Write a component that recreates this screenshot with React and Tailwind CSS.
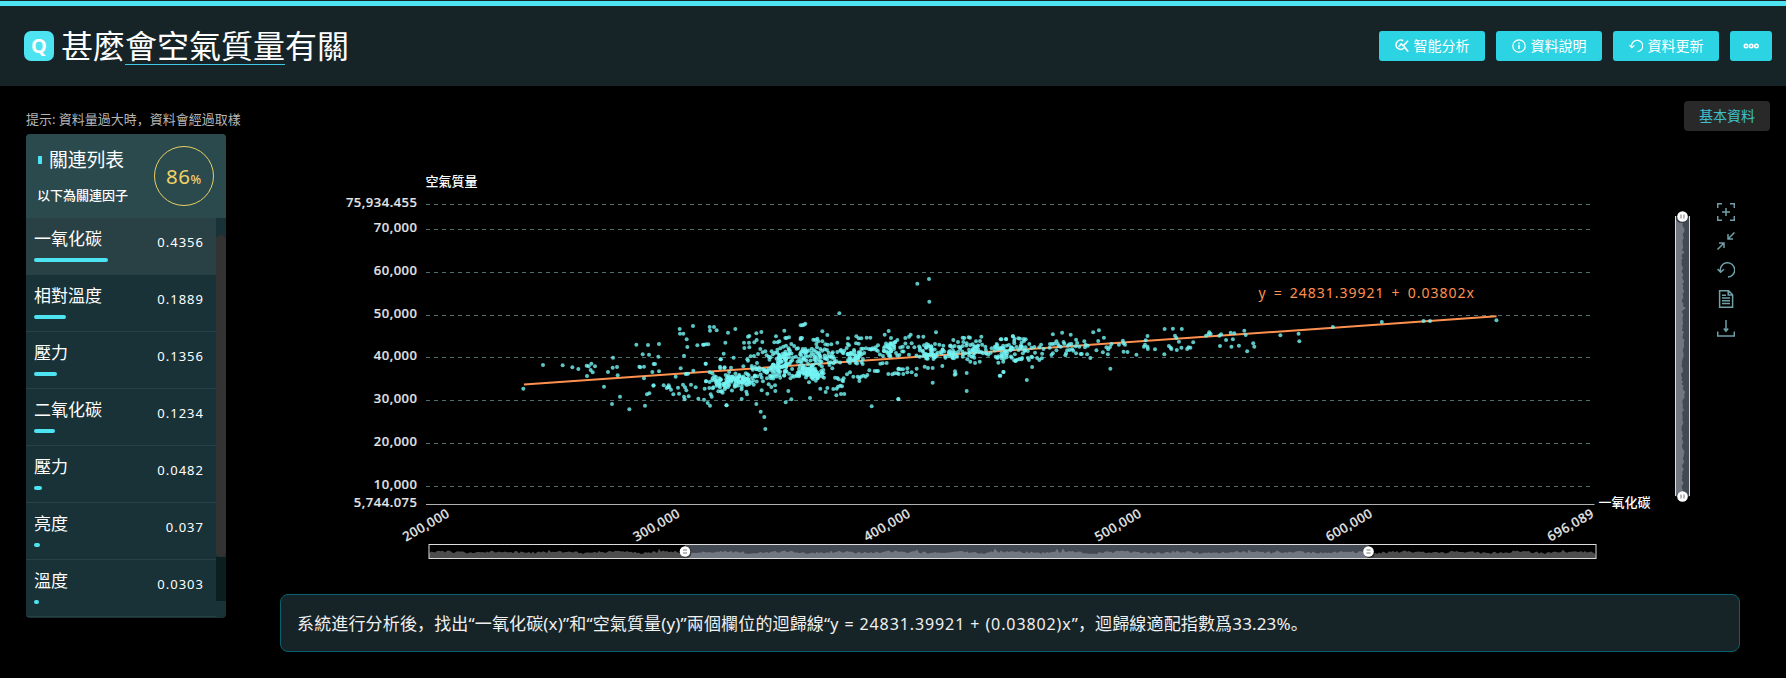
import React from 'react';
import clsx from 'clsx';

const factors = [
  { name: '一氧化碳', value: '0.4356', bar: 74 },
  { name: '相對溫度', value: '0.1889', bar: 32 },
  { name: '壓力', value: '0.1356', bar: 23 },
  { name: '二氧化碳', value: '0.1234', bar: 21 },
  { name: '壓力', value: '0.0482', bar: 8 },
  { name: '亮度', value: '0.037', bar: 6 },
  { name: '溫度', value: '0.0303', bar: 5 },
];

const yTicks = [
  { label: '75,934.455', y: 204.5 },
  { label: '70,000', y: 229.5 },
  { label: '60,000', y: 272.5 },
  { label: '50,000', y: 315.5 },
  { label: '40,000', y: 357.5 },
  { label: '30,000', y: 400.5 },
  { label: '20,000', y: 443.5 },
  { label: '10,000', y: 486.5 },
  { label: '5,744.075', y: 504.5 },
];

const xTicks = [
  { label: '200,000', x: 426 },
  { label: '300,000', x: 656.5 },
  { label: '400,000', x: 887 },
  { label: '500,000', x: 1118 },
  { label: '600,000', x: 1349 },
  { label: '696,089', x: 1570.5 },
];

// Each group is "x,y" pairs from its own origin, kx and ky units to the pixel
const pointGroups = [
  {
    x: 330,
    y: 160,
    kx: 3,
    ky: 3,
    pts: '639,615 698,616 727,622 745,627 770,617 776,619 784,611 795,619 782,630 788,637 771,648 834,636 848,623 861,621 849,593 863,646 919,554 954,555 987,552 938,583 957,584 985,590 928,620 931,622 942,620 971,612 975,612 967,636 987,634 1049,507 1050,521 1060,521 1089,498 1070,538 1072,561 1062,587 1102,556 1119,554 1122,554 1128,553 1135,553 1139,501 1152,501 1140,512 1160,511 1186,548 1194,518 1181,581 1172,598 1127,611 1052,625 1090,632 1070,641 1074,641 1067,642 1037,650 1139,637 1147,640 1170,620 1183,624 1128,664',
  },
  {
    x: 330,
    y: 370,
    kx: 3,
    ky: 3,
    pts: '580,56 822,50 870,80 846,102 898,118 945,107 951,73 958,70 971,46 970,47 942,25 1001,46 1010,54 1016,46 1018,52 1014,52 1023,59 1030,73 1044,53 1047,71 1059,44 1065,52 1069,61 1062,80 1064,88 1076,79 1083,44 1097,52 1105,86 1122,89 1133,99 1140,107 1124,56 1128,34 1138,54 1142,73 1145,80 1190,106 1150,52 1158,32 1160,42 1168,25 1172,28 1165,64 1178,68 1187,15 1195,35 1197,46 1184,58',
  },
  {
    x: 660,
    y: 310,
    kx: 3,
    ky: 3,
    pts: '226,57 264,80 268,78 252,98 267,98 283,97 290,90 289,70 304,66 307,96 253,114 268,112 301,117 294,132 308,127 316,124 320,136 348,79 343,97 353,97 358,94 373,62 376,84 380,84 387,82 394,102 361,115 370,110 378,107 386,115 376,125 390,122 335,124 339,133 345,128 326,140 352,128 358,135 365,141 422,46 427,46 432,44 436,41 422,84 426,84 422,88 410,116 414,115 428,117 436,117 433,128 440,124 437,137 460,89 466,90 472,86 475,94 469,102 487,64 502,75 487,94 496,103 503,104 514,103 532,98 538,10 471,112 481,117 487,122 494,118 462,121 455,128 461,134 473,130 480,137 501,120 506,128 510,140 564,85 563,102 567,106 560,114 553,122 550,130 541,122 532,126 572,130 564,131 589,79 596,85 604,85 620,83 631,83 596,101 588,100 604,116 609,116 582,120 596,127 600,137 588,137 618,115 627,117 632,118 638,115 642,118 654,106 649,120 674,74 686,63 693,84 691,100 698,100 706,96 712,90 672,113 682,111 680,124 687,128 694,123 702,117 708,129 712,137 182,148 221,143 194,172 181,175 213,173 262,148 264,152 272,139 282,138 291,159 250,169 275,168 285,171 137,161 447,217 385,243 346,243 322,251 334,231 305,241 326,223 259,245 261,253 245,267 199,286 289,282 302,305 313,321 316,357 377,277 394,268 450,264 481,236 502,234 497,246 520,237 530,236 534,230 541,227 546,229 547,211 551,205 549,214 532,204 525,203 536,208 543,252 529,256 553,252 570,187 580,200 561,193 598,204 598,213 603,200 593,200 610,197 617,200 622,195 608,162 628,181 644,183 650,183 654,183 661,161 668,160 685,192 697,193 712,190 715,177 715,267 635,289 704,190 680,159',
  },
  {
    x: 720,
    y: 240,
    kx: 3,
    ky: 3,
    pts: '592,131 627,117 628,185 572,284 567,290 556,294 595,290 610,290 648,277 535,478 638,428 588,405 575,397 590,386 562,397 550,402 536,402 536,386 542,388 549,388 562,385 614,380 624,384 638,384 667,378 705,394 707,402 704,404 740,399 740,453 839,407 850,396 728,293 733,294 746,292 750,293 784,290 700,300 714,306 730,306 768,304 780,303 842,298 858,297 879,289 895,295 670,317 690,318 704,318 716,320 728,318 620,312 625,315 612,316 645,312 658,314 564,322 583,322 575,310 600,325 830,312 825,320 815,325 800,340 812,338 835,368 845,355 860,352 887,362 898,358',
  },
  {
    x: 1000,
    y: 250,
    kx: 2.8,
    ky: 3,
    pts: '4,268 17,268 36,259 56,266 66,267 72,268 82,282 25,285 40,280 18,287 46,291 32,292 96,291 88,293 115,284 110,292 122,297 118,311 98,308 148,253 174,248 198,254 140,282 146,282 152,281 158,274 162,282 178,276 180,281 190,287 194,283 200,282 213,269 216,279 212,289 222,290 236,274 240,284 246,287 238,292 244,313 253,324 226,312 229,312 213,310 205,302 202,297 188,301 195,300 183,316 185,310 144,315 148,310 158,301 170,290 139,293 165,288 261,247 277,241 291,263 275,273 270,301 288,307 298,292 303,298 302,313 308,291 312,282 333,284 344,272 346,280 350,284 346,305 357,306 382,314 309,356 413,258 408,271 406,284 403,290 413,290 414,297 434,298 461,237 484,236 509,237 490,257 494,264 501,275 541,277 473,288 478,293 480,297 495,300 508,293 524,297 528,292 533,293 460,313 586,247 590,252 577,257 584,253 619,253 614,257 616,288 633,270 646,248 656,250 652,268 648,290 669,287 684,242 688,255 709,280 712,290 692,304 785,256 836,251 838,274 932,231 1069,216 1186,213 1204,213 1390,211 75,390 90,351 10,366 1,377 9,335 43,333 48,329 60,328 62,324 64,310 78,324 88,320 90,322 81,330 104,324 110,330 117,325 5,318 12,308 18,316 20,310 10,316 70,302 78,303 62,296 52,300',
  },
];

// Dense spots: centre, spread and number of samples
const clusters = [
  [737, 381, 9, 3.5, 62],
  [724, 383, 7, 5, 28],
  [752, 378, 9, 5, 26],
  [773, 372, 7, 4, 48],
  [783, 360, 7, 5, 52],
  [803, 371, 7, 4.5, 50],
  [816, 373, 5, 3, 38],
  [805, 356, 5, 5, 26],
  [825, 360, 5, 4, 28],
  [853, 357, 6, 4, 34],
  [891, 350, 8, 4.5, 32],
  [931, 353, 7, 4, 40],
  [951, 354, 6, 3.5, 24],
  [972, 353, 8, 5, 40],
  [1004, 352, 6, 4, 26],
  [1021, 347, 7, 3.5, 14],
];

const makeRandom = (seed) => () => {
  seed = (seed * 16807) % 2147483647;
  return seed / 2147483647;
};

const points = pointGroups.flatMap((g) =>
  g.pts.split(' ').map((p) => {
    const [px, py] = p.split(',').map(Number);
    return [g.x + px / g.kx, g.y + py / g.ky];
  })
);

const rand = makeRandom(4711);
const spread = () => (rand() + rand() + rand() - 1.5) * 2;
clusters.forEach(([cx, cy, sx, sy, n]) => {
  for (let i = 0; i < n; i++) {
    points.push([cx + spread() * sx, cy + spread() * sy]);
  }
});

const wave = (length, seed) => {
  const r = makeRandom(seed);
  return Array.from({ length }, (_, i) => 5.8 + Math.sin(i / 4.5) * 0.6 + (r() - 0.5) * 2.4 + (r() > 0.985 ? 2.5 : 0));
};

const xWave = `M429,558 ${wave(584, 91).map((h, i) => `L${429 + i * 2},${(558 - h).toFixed(1)}`).join(' ')} L1596,558 Z`;
const yWave = `M1676,216 ${wave(141, 37).map((h, i) => `L${(1677 + h).toFixed(1)},${216 + i * 2}`).join(' ')} L1676,496 Z`;

const Handle = ({ x, y, vertical }) => (
  <g transform={`translate(${x} ${y}) rotate(${vertical ? 90 : 0})`}>
    <circle cx="1" cy="1" r="5.5" fill="#000" opacity="0.5" />
    <circle r="5.3" fill="#fff" />
    <path d="M-2,-1.5H2M-2,1.5H2" stroke="#777" strokeWidth="1" />
  </g>
);

const ScatterChart = () => (
  <svg
    width="1474"
    height="463"
    viewBox="226 131 1474 463"
    className="block shrink-0 font-['Noto_Sans','Noto_Sans_CJK_SC',sans-serif] text-[13px] font-medium"
  >
    {yTicks.slice(0, -1).map((t) => (
      <path key={t.y} d={`M426,${t.y}H1591`} stroke="#4d6f6d" strokeDasharray="4 4" />
    ))}
    <path d="M426,504.5H1594.5" stroke="#b0b0b0" />
    <g fill="#e6e6e6" stroke="#e6e6e6" strokeWidth="0.2" letterSpacing="0.5">
      {yTicks.map((t) => (
        <text key={t.label} x="417.5" y={t.y + 2.5} textAnchor="end">
          {t.label}
        </text>
      ))}
      {xTicks.map((t) => (
        <text key={t.label} transform={`translate(${t.x} 525) rotate(-30)`} y="4.5" textAnchor="middle">
          {t.label}
        </text>
      ))}
    </g>
    <text x="425.5" y="185.5" fill="#fff">空氣質量</text>
    <text x="1598.5" y="507" fill="#fff">一氧化碳</text>

    <path d="M524,384.6L1496.5,316.2" stroke="#ff9150" strokeWidth="2" />
    {points.map(([x, y], i) => (
      <circle key={i} cx={x} cy={y} r="2" fill="#74f5f5" fillOpacity="0.8" />
    ))}
    <text x="1258.5" y="298" fill="#ff9150" className="text-[14px] font-normal" letterSpacing="1" wordSpacing="2.4">
      y = 24831.39921 + 0.03802x
    </text>

    {/* horizontal zoom slider */}
    <path d={xWave} fill="#4d4d4d" />
    <rect x="685" y="545" width="683.5" height="13" fill="#a7b7cc" fillOpacity="0.4" />
    <rect x="429" y="544.5" width="1167" height="14" fill="none" stroke="#dcdcdc" />
    <Handle x={685} y={551.5} />
    <Handle x={1368.5} y={551.5} />

    {/* vertical zoom slider */}
    <path d={yWave} fill="#4d4d4d" />
    <rect x="1675.5" y="216.5" width="14" height="280" fill="#a7b7cc" fillOpacity="0.4" />
    <path d="M1675.5,216V496M1689.5,216V496" stroke="#dcdcdc" />
    <Handle x={1682.5} y={216.5} vertical />
    <Handle x={1682.5} y={496.5} vertical />
  </svg>
);

const Icon = ({ size = 14, children, ...rest }) => (
  <svg width={size} height={size} viewBox="0 0 18 18" fill="none" stroke="currentColor" strokeWidth="1.5" {...rest}>
    {children}
  </svg>
);

const UndoPath = () => <path d="M3.4,10.2A7.2,7.2 0 1 1 11,16.1M0.6,8L3.6,11.2L7,8.2" />;

const toolIcons = [
  <path d="M.7,5V.7H5M13,.7H17.3V5M17.3,13V17.3H13M5,17.3H.7V13M9,5V13M5,9H13" />,
  <path d="M17.5,.5L11,7M11,2V7H16M.5,17.5L7,11M2,11H7V16" />,
  <UndoPath />,
  <path d="M2.6,.7H11.5L15.6,4.8V17.3H2.6ZM11.2,.7V5H15.6M5,5.2H9M5,8H13M5,10.8H13M5,13.6H13" />,
  <path d="M.7,12.5V17H17.3V12.5M9,1V12M6.8,9.5L9,12.2L11.2,9.5" />,
];

const ActionButton = ({ icon, children }) => (
  <button className="flex h-[30px] w-[106px] items-center justify-center gap-[5px] rounded-[3px] bg-[#2cd3e3] text-sm text-white">
    {icon}
    <span>{children}</span>
  </button>
);

const Header = () => (
  <header className="flex h-[86px] items-start justify-between border-t border-[#172428] bg-[#162428]">
    <div className="flex w-full items-center justify-between border-t-[5px] border-[#4de3f0] pt-[25px] pr-[14px] pl-6">
      <div className="flex h-[30px] items-center gap-[7px]">
        <div className="flex size-[30px] items-center justify-center rounded-[7px] bg-[#4de3f0] text-[20px] font-bold text-white">
          Q
        </div>
        <h1 className="text-[32px] leading-[36px] whitespace-nowrap text-white">
          甚麼<span className="inline-block border-b border-[#3fc8e8]">會空氣質量</span>有關
        </h1>
      </div>
      <div className="flex gap-[11px]">
        <ActionButton
          icon={
            <Icon strokeWidth="2">
              <path d="M10.5,2.2A6,6 0 1 0 12.5,10.5L17,16.5M4.8,10L8,6.2L10.5,8.8L16.8,2.2" />
            </Icon>
          }
        >
          智能分析
        </ActionButton>
        <ActionButton
          icon={
            <Icon strokeWidth="1.6">
              <circle cx="9" cy="9" r="8" />
              <path d="M9,7.5V13M9,4.4V6.2" strokeWidth="2" />
            </Icon>
          }
        >
          資料說明
        </ActionButton>
        <ActionButton icon={<Icon><UndoPath /></Icon>}>資料更新</ActionButton>
        <button className="flex h-[30px] w-[42px] items-center justify-center rounded-[3px] bg-[#2cd3e3] text-white">
          <svg width="16" height="6" viewBox="0 0 16 6" fill="none" stroke="currentColor" strokeWidth="1.6">
            <circle cx="3" cy="3" r="1.7" />
            <circle cx="8.2" cy="3" r="1.7" />
            <circle cx="13.4" cy="3" r="1.7" />
          </svg>
        </button>
      </div>
    </div>
  </header>
);

const FactorPanel = () => (
  <aside className="ml-[26px] w-[200px] shrink-0">
    <p className="pt-[23px] pb-[5px] text-[13px] leading-5 whitespace-nowrap text-[#b5b5b5]">
      提示: 資料量過大時，資料會經過取樣
    </p>
    <div className="h-[484px] overflow-hidden rounded-[4px] bg-[#183238]">
      <div className="flex h-[84px] justify-between bg-[#2b4a4e] pt-3 pr-3 pl-3 text-white">
        <div>
          <h2 className="flex items-center gap-[7px] pt-px text-[18.8px] leading-[26px]">
            <span className="h-2 w-1 bg-[#4de3f0]" />
            關連列表
          </h2>
          <p className="mt-3 -ml-px text-[13px] leading-5 font-medium">以下為關連因子</p>
        </div>
        <div className="flex size-[60px] items-baseline justify-center rounded-full border border-[#e8d061] pr-px leading-[58px] text-[#f0d264]">
          <span className="text-[20.5px] tracking-[0.5px]">86</span>
          <span className="text-[12.5px] font-medium">%</span>
        </div>
      </div>
      <div className="flex">
        <ul className="w-[190px]">
          {factors.map((f, i) => (
            <li
              key={i}
              className={clsx(
                'flex h-[57px] justify-between border-b border-[#294044] pr-[12px] pl-2 text-white',
                i === 0 && 'bg-[#294044]'
              )}
            >
              <div className="pt-[9px]">
                <div className="text-[17px] leading-6">{f.name}</div>
                <div className="mt-[7px] h-1 rounded-full bg-[#4de3f0]" style={{ width: f.bar }} />
              </div>
              <div className="pt-[14px] text-[13px] leading-5 tracking-[1px]">{f.value}</div>
            </li>
          ))}
        </ul>
        <div className="h-[383px] w-[10px] bg-[#0c1e1e]">
          <div className="h-[17px] bg-[#183238]" />
          <div className="h-[322px] bg-[#183238]">
            <div className="h-full rounded-[5px] bg-[#333]" />
          </div>
        </div>
      </div>
    </div>
  </aside>
);

const App = () => {
  return (
    <div className="h-[678px] w-[1786px] overflow-hidden bg-black font-['Noto_Sans','Noto_Sans_CJK_SC',sans-serif]">
      <Header />
      <div className="flex">
        <FactorPanel />
        <main className="flex flex-1 flex-col">
          <div className="flex justify-end pt-[15px] pr-4">
            <button className="h-[30px] w-[86px] rounded-[4px] bg-[#292929] text-sm text-[#40c0cc]">基本資料</button>
          </div>
          <div className="flex">
            <ScatterChart />
            <div className="ml-[17px] flex flex-col gap-[11px] pt-[72px] text-[#6ea0a6]">
              {toolIcons.map((icon, i) => (
                <Icon key={i} size={18}>
                  {icon}
                </Icon>
              ))}
            </div>
          </div>
          <p className="mr-[46px] ml-[54px] flex h-[58px] items-center rounded-lg border border-[#07616c] bg-[#162428] px-4 pt-px text-[17px] tracking-[0.15px] whitespace-pre text-[#f0f0f0]">
            系統進行分析後，找出“一氧化碳(x)”和“空氣質量(y)”兩個欄位的迴歸線“
            <span className="text-[16px] tracking-[0.9px]">y = 24831.39921 + (0.03802)x</span>
            ”，迴歸線適配指數爲33.23%。
          </p>
        </main>
      </div>
    </div>
  );
};

export default App;
